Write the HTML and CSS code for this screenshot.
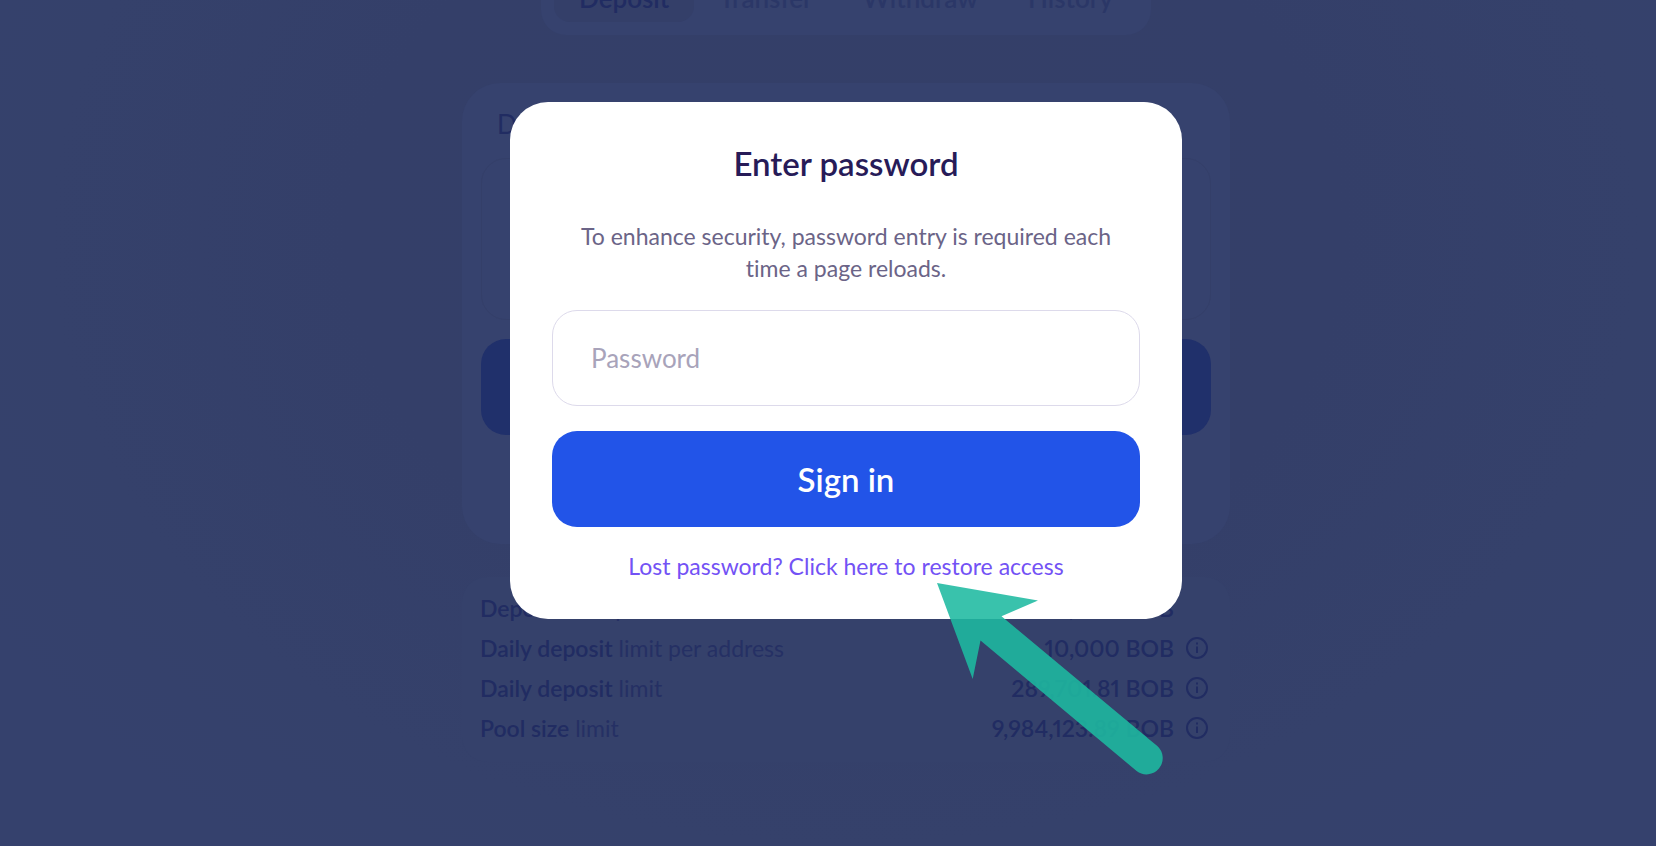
FILE: index.html
```html
<!DOCTYPE html>
<html lang="en">
<head>
<meta charset="utf-8">
<title>Enter password</title>
<link rel="stylesheet" href="styles.css">
</head>
<body>
<main class="page">
  <nav class="tabs">
    <a class="tab tab-active" href="#deposit">Deposit</a>
    <a class="tab" href="#transfer">Transfer</a>
    <a class="tab" href="#withdraw">Withdraw</a>
    <a class="tab" href="#history">History</a>
  </nav>
  <section class="card">
    <h2 class="card-title">Deposit</h2>
    <div class="amount-box"></div>
    <div class="card-action"></div>
  </section>
  <section class="limits">
    <div class="limit"><span class="limit-name"><b>Deposit</b> limit per transaction</span><span class="limit-value">10,000 BOB</span><span class="info"></span></div>
    <div class="limit"><span class="limit-name"><b>Daily deposit</b> limit per address</span><span class="limit-value">10,000 BOB</span>
      <svg class="info" viewBox="0 0 22 22"><circle cx="11" cy="11" r="10"/><path d="M11 9.500v6.500M11 5.500v2"/></svg></div>
    <div class="limit"><span class="limit-name"><b>Daily deposit</b> limit</span><span class="limit-value">289,701.81 BOB</span>
      <svg class="info" viewBox="0 0 22 22"><circle cx="11" cy="11" r="10"/><path d="M11 9.500v6.500M11 5.500v2"/></svg></div>
    <div class="limit"><span class="limit-name"><b>Pool size</b> limit</span><span class="limit-value">9,984,123.89 BOB</span>
      <svg class="info" viewBox="0 0 22 22"><circle cx="11" cy="11" r="10"/><path d="M11 9.500v6.500M11 5.500v2"/></svg></div>
  </section>
</main>
<div class="overlay">
  <form class="modal" role="dialog" aria-labelledby="modal-title">
    <h1 class="modal-title" id="modal-title">Enter password</h1>
    <p class="modal-text">To enhance security, password entry is required each time a page reloads.</p>
    <input class="field" type="password" placeholder="Password" aria-label="Password">
    <button class="submit" type="button">Sign in</button>
    <a class="restore" href="#restore">Lost password? Click here to restore access</a>
    <svg class="arrow" viewBox="0 0 230 196" aria-hidden="true"><path d="M0 0L101 17.5L64.500 33.300L220.300 163.100A16.200 16.200 0 0 1 199.600 188L43.500 57.500L35.700 96Z"/></svg>
  </form>
</div>
</body>
</html>
```
FILE: styles.css
```css
* { box-sizing: border-box; }

body {
  margin: 0;
  min-height: 100vh;
  overflow: hidden;
  font-family: Lato, sans-serif;
  font-size: 23px;
  font-variant-ligatures: none;
  font-variant-numeric: proportional-nums;
  color: #212c62;
  background: radial-gradient(ellipse 60% 90% at 51% 28%, #343f68 0%, #343f69 50%, #35416b 80%, #35416d 100%);
}

.page {
  display: flex;
  flex-direction: column;
  align-items: center;
  margin-top: -38px;
  padding-left: 36px;
}

.tabs {
  display: flex;
  padding: 13px;
  margin-bottom: 48px;
  border-radius: 25px;
  background: #36426e;
}

.tab {
  padding: 0 25px;
  border-radius: 16px;
  font-size: 26px;
  font-weight: 600;
  line-height: 47px;
  color: #2b3767;
  text-decoration: none;
}

.tab-active {
  color: #212c62;
  background: #343f69;
}

.card {
  width: 768px;
  max-width: 100%;
  padding: 19px 19px 109px;
  margin-bottom: 33px;
  border-radius: 38px;
  background: #36426e;
}

.card-title {
  margin: 0 0 12px;
  padding: 0 16px;
  font-size: 26px;
  font-weight: 400;
  line-height: 44px;
}

.amount-box {
  height: 162px;
  margin-bottom: 19px;
  border: 1px solid #343f69;
  border-radius: 25px;
}

.card-action {
  height: 96px;
  border-radius: 25px;
  background: #20306b;
}

.limits {
  width: 768px;
  max-width: 100%;
  padding: 11px 22px 14px 18px;
  border-radius: 25px;
  background: #35416b;
}

.limit {
  display: flex;
  align-items: center;
  gap: 12px;
  line-height: 40px;
}

.limit-name { flex: 1; color: #253064; }
.limit b { color: #212c62; }
.limit b, .limit-value { font-weight: 600; }

.info {
  width: 22px;
  height: 22px;
  fill: none;
  stroke: #212c62;
  stroke-width: 2;
}

.overlay {
  position: fixed;
  inset: 0;
  display: flex;
  justify-content: center;
  align-items: flex-start;
  padding: 102px 0 0 36px;
}

.modal {
  position: relative;
  display: flex;
  flex-direction: column;
  width: 672px;
  padding: 41px 42px 40px;
  border-radius: 38px;
  background: #fff;
  text-align: center;
}

.modal-title {
  margin: 0 0 37px;
  font-size: 33px;
  font-weight: 600;
  line-height: 40px;
  color: #271b58;
}

.modal-text {
  margin: 0 0 26px;
  padding: 0 20px;
  line-height: 32px;
  color: #6b6487;
}

.field {
  height: 96px;
  margin-bottom: 25px;
  padding: 0 38px;
  border: 1px solid #dddaeb;
  border-radius: 25px;
  font: inherit;
  font-size: 26px;
  color: #271b58;
  background: #fff;
}

.field::placeholder { color: #a8a3ba; opacity: 1; }

.submit {
  height: 96px;
  margin-bottom: 26px;
  border: 0;
  border-radius: 25px;
  font: inherit;
  font-size: 33px;
  font-weight: 600;
  color: #fff;
  background: #2254e8;
}

.restore {
  line-height: 26px;
  color: #7352f5;
  text-decoration: none;
}

.arrow {
  position: absolute;
  left: 427px;
  top: 481px;
  width: 230px;
  fill: rgba(30, 185, 160, 0.88);
}
```
